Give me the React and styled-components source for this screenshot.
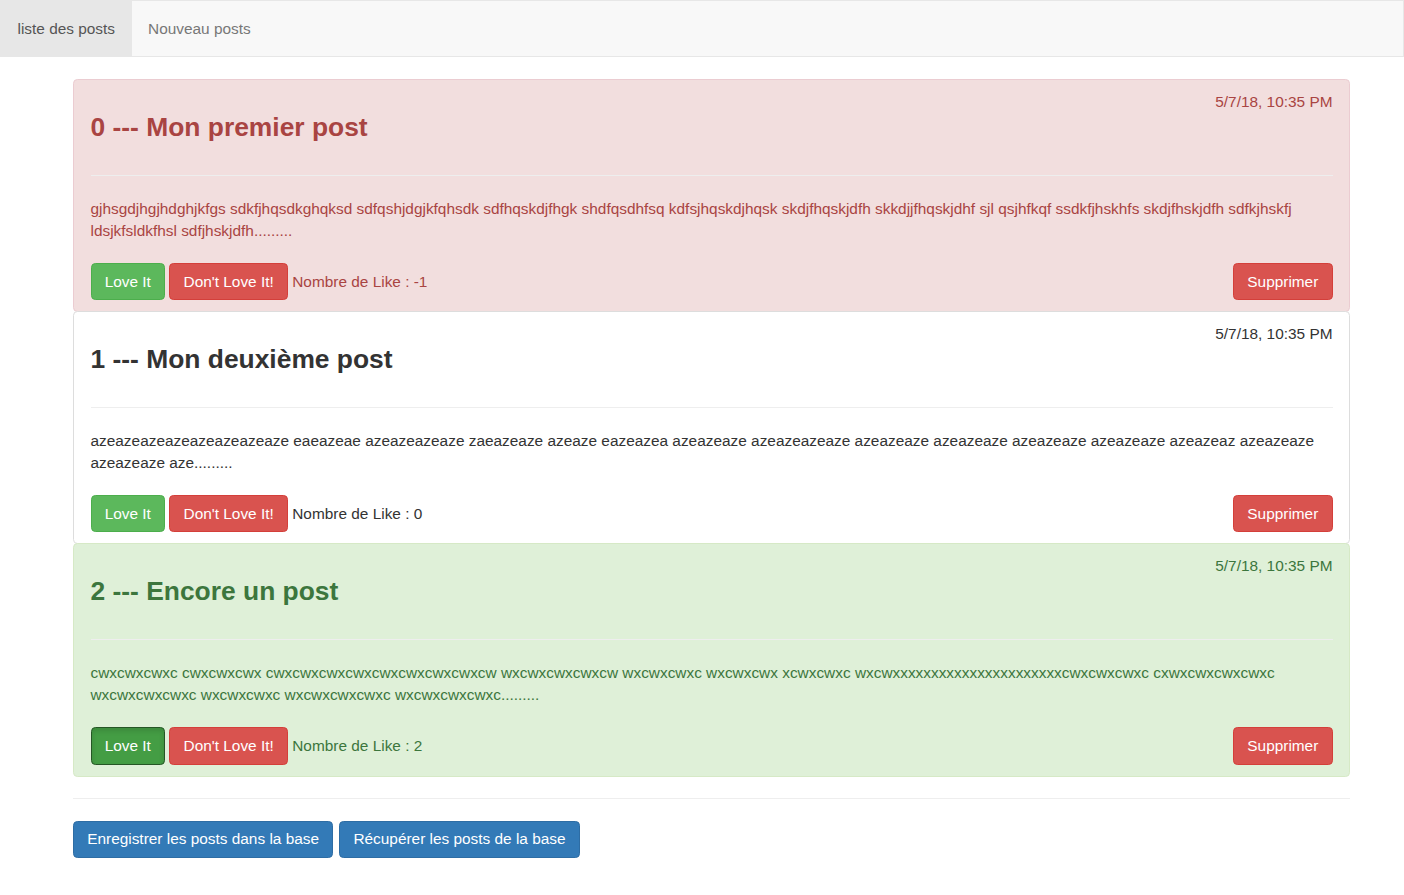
import React from "react";
import styled, { createGlobalStyle, css } from "styled-components";

const Global = createGlobalStyle`
  html, body { margin: 0; padding: 0; background: #fff; }
  body {
    font-family: "Liberation Sans", Arial, Helvetica, sans-serif;
    font-size: 15.4px;
    line-height: 22px;
    color: #333;
  }
  * { box-sizing: border-box; }
`;

const Navbar = styled.nav`
  height: 57px;
  background: #f8f8f8;
  border: 1px solid #e7e7e7;
  margin-bottom: 22px;
  display: flex;
`;

const NavItem = styled.a`
  display: block;
  padding: 16.5px 16.5px;
  line-height: 22px;
  font-size: 15.4px;
  color: ${(p) => (p.$active ? "#555" : "#777")};
  background: ${(p) => (p.$active ? "#e7e7e7" : "transparent")};
  text-decoration: none;
  height: 55px;
`;

const Container = styled.div`
  width: 1277px;
  margin-left: 73px;
`;

const variants = {
  danger: css`
    background: #f2dede;
    color: #a94442;
    border-color: #ebccd1;
  `,
  success: css`
    background: #dff0d8;
    color: #3c763d;
    border-color: #d6e9c6;
  `,
  default: css`
    background: #fff;
    color: #333;
    border-color: #ddd;
  `,
};

const Card = styled.div`
  border: 1px solid;
  border-radius: 4.4px;
  padding: 11px 16.5px;
  margin-bottom: -1px;
  position: relative;
  ${(p) => variants[p.$variant]}
`;

const Header = styled.div`
  display: flow-root;
`;

const DateLine = styled.div`
  float: right;
  line-height: 22px;
`;

const Title = styled.h3`
  margin: 22px 0 11px;
  font-size: 26.4px;
  line-height: 29px;
  font-weight: bold;
  color: inherit;
`;

const Rule = styled.hr`
  margin: 22px 0;
  border: 0;
  border-top: 1px solid #eee;
  height: 0;
`;

const Body = styled.p`
  margin: 0 0 11px;
  word-wrap: break-word;
`;

const Actions = styled.div`
  display: flex;
  align-items: center;
  gap: 4.3px;
  margin-top: 21px;
`;

const btnVariants = {
  success: css`
    background: #5cb85c;
    border-color: #4cae4c;
  `,
  successActive: css`
    background: #449d44;
    border-color: #255625;
    box-shadow: inset 0 3px 5px rgba(0, 0, 0, 0.125);
  `,
  danger: css`
    background: #d9534f;
    border-color: #d43f3a;
  `,
  primary: css`
    background: #337ab7;
    border-color: #2e6da4;
  `,
};

const Button = styled.button`
  font-family: inherit;
  font-size: 15.4px;
  line-height: 22px;
  padding: 6.6px 13.2px;
  border: 1px solid;
  border-radius: 4.4px;
  color: #fff;
  cursor: pointer;
  white-space: nowrap;
  ${(p) => btnVariants[p.$variant]}
  ${(p) => p.$right && css`margin-left: auto;`}
`;

const Likes = styled.span``;

const Footer = styled.div`
  display: flex;
  gap: 6px;
`;

const FooterRule = styled.hr`
  margin: 22px 0;
  border: 0;
  border-top: 1px solid #eee;
  height: 0;
`;

const posts = [
  {
    id: 0,
    variant: "danger",
    title: "Mon premier post",
    content:
      "gjhsgdjhgjhdghjkfgs sdkfjhqsdkghqksd sdfqshjdgjkfqhsdk sdfhqskdjfhgk shdfqsdhfsq kdfsjhqskdjhqsk skdjfhqskjdfh skkdjjfhqskjdhf sjl qsjhfkqf ssdkfjhskhfs skdjfhskjdfh sdfkjhskfj ldsjkfsldkfhsl sdfjhskjdfh.........",
    likes: -1,
    active: false,
  },
  {
    id: 1,
    variant: "default",
    title: "Mon deuxième post",
    content:
      "azeazeazeazeazeazeazeaze eaeazeae azeazeazeaze zaeazeaze azeaze eazeazea azeazeaze azeazeazeaze azeazeaze azeazeaze azeazeaze azeazeaze azeazeaz azeazeaze azeazeaze aze.........",
    likes: 0,
    active: false,
  },
  {
    id: 2,
    variant: "success",
    title: "Encore un post",
    content:
      "cwxcwxcwxc cwxcwxcwx cwxcwxcwxcwxcwxcwxcwxcwxcw wxcwxcwxcwxcw wxcwxcwxc wxcwxcwx xcwxcwxc wxcwxxxxxxxxxxxxxxxxxxxxxxcwxcwxcwxc cxwxcwxcwxcwxc wxcwxcwxcwxc wxcwxcwxc wxcwxcwxcwxc wxcwxcwxcwxc.........",
    likes: 2,
    active: true,
  },
];

function Post({ post }) {
  return (
    <Card $variant={post.variant}>
      <Header>
        <DateLine>5/7/18, 10:35 PM</DateLine>
        <Title>
          {post.id} --- {post.title}
        </Title>
      </Header>
      <Rule />
      <Body>{post.content}</Body>
      <Actions>
        <Button $variant={post.active ? "successActive" : "success"}>Love It</Button>
        <Button $variant="danger">Don't Love It!</Button>
        <Likes>Nombre de Like : {post.likes}</Likes>
        <Button $variant="danger" $right>
          Supprimer
        </Button>
      </Actions>
    </Card>
  );
}

export default function App() {
  return (
    <>
      <Global />
      <Navbar>
        <NavItem $active>liste des posts</NavItem>
        <NavItem>Nouveau posts</NavItem>
      </Navbar>
      <Container>
        {posts.map((p) => (
          <Post key={p.id} post={p} />
        ))}
        <FooterRule />
        <Footer>
          <Button $variant="primary">Enregistrer les posts dans la base</Button>
          <Button $variant="primary">Récupérer les posts de la base</Button>
        </Footer>
      </Container>
    </>
  );
}
